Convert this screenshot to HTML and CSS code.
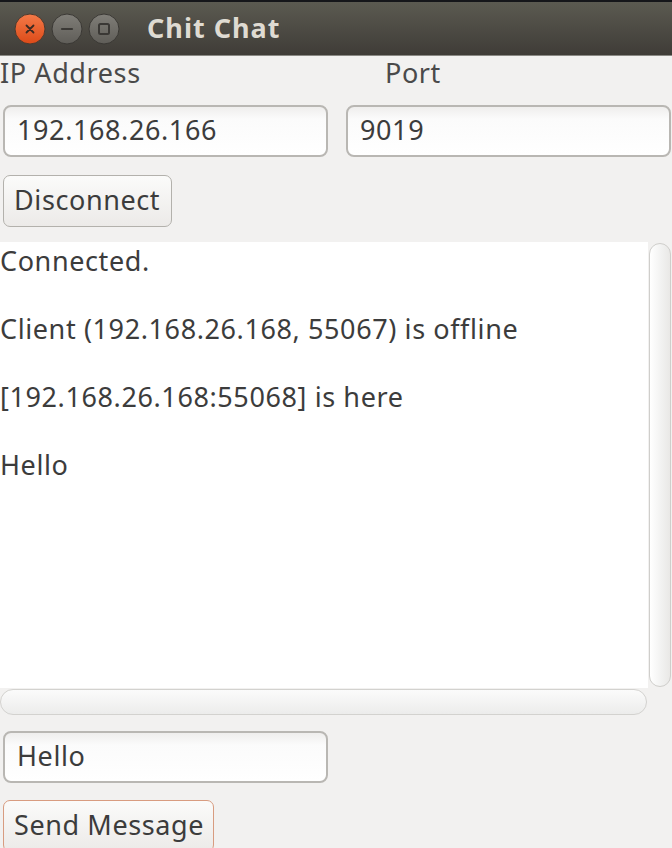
FILE: index.html
```html
<!DOCTYPE html>
<html>
<head>
<meta charset="utf-8">
<title>Chit Chat</title>
<link rel="stylesheet" href="styles.css">
</head>
<body>
<div class="window">
  <header class="titlebar">
    <div class="wbtns">
      <svg class="wbtn" width="32" height="32" viewBox="0 0 32 32">
        <defs>
          <linearGradient id="gClose" x1="0" y1="0" x2="0" y2="1">
            <stop offset="0" stop-color="#f47a48"/>
            <stop offset="1" stop-color="#dc4a18"/>
          </linearGradient>
          <linearGradient id="gGray" x1="0" y1="0" x2="0" y2="1">
            <stop offset="0" stop-color="#807e78"/>
            <stop offset="1" stop-color="#5f5d58"/>
          </linearGradient>
        </defs>
        <circle cx="16" cy="16" r="15" fill="url(#gClose)" stroke="#4a3a30" stroke-width="1"/>
        <path d="M12.5 12.5 L19.5 19.5 M19.5 12.5 L12.5 19.5" stroke="#3b2a22" stroke-width="1.8" stroke-linecap="round"/>
      </svg>
      <svg class="wbtn" width="32" height="32" viewBox="0 0 32 32">
        <circle cx="16" cy="16" r="15" fill="url(#gGray)" stroke="#3a3834" stroke-width="1"/>
        <path d="M11 16 H21" stroke="#3a3835" stroke-width="2.2" stroke-linecap="round"/>
      </svg>
      <svg class="wbtn" width="32" height="32" viewBox="0 0 32 32">
        <circle cx="16" cy="16" r="15" fill="url(#gGray)" stroke="#3a3834" stroke-width="1"/>
        <rect x="11" y="11" width="10" height="10" rx="1.5" fill="none" stroke="#3a3835" stroke-width="2"/>
      </svg>
    </div>
    <div class="title">Chit Chat</div>
  </header>

  <main class="content">
    <div class="conn">
      <span class="lbl lbl-ip">IP Address</span>
      <span class="lbl lbl-port">Port</span>
      <div class="entry">192.168.26.166</div>
      <div class="entry">9019</div>
    </div>

    <div class="btn btn-disconnect">Disconnect</div>

    <div class="log">
      <div class="view">
        <p>Connected.</p>
        <p>Client (192.168.26.168, 55067) is offline</p>
        <p>[192.168.26.168:55068] is here</p>
        <p>Hello</p>
      </div>
      <div class="vscroll"></div>
      <div class="hscroll"></div>
    </div>

    <div class="entry entry-msg">Hello</div>

    <div class="btn btn-send">Send Message</div>
  </main>
</div>
</body>
</html>
```

FILE: styles.css
```css
* { box-sizing: border-box; }

html, body {
  margin: 0;
  padding: 0;
  width: 672px;
  height: 848px;
  overflow: hidden;
  background: #f2f1f0;
}

body {
  font-family: "Noto Sans", "Open Sans", "DejaVu Sans", sans-serif;
  font-size: 27px;
  letter-spacing: 0.6px;
  line-height: 34px;
  color: #3c3c3c;
}

.window {
  display: flex;
  flex-direction: column;
  height: 848px;
}

.titlebar {
  height: 56px;
  flex: none;
  display: flex;
  align-items: center;
  padding-left: 14px;
  border-top: 2px solid #15161a;
  border-bottom: 1px solid #8a8984;
  background: linear-gradient(#5b5a51, #3f3c37);
}

.wbtns {
  display: flex;
  gap: 5px;
  margin-top: 1px;
}

.wbtn { display: block; }

.title {
  margin-left: 27px;
  font-weight: bold;
  color: #dfdbd2;
  font-size: 27px;
  letter-spacing: 1px;
  margin-top: -1px;
}

.content {
  display: flex;
  flex-direction: column;
  align-items: flex-start;
}

.conn {
  display: grid;
  grid-template-columns: 325px 325px;
  column-gap: 18px;
  row-gap: 15px;
  padding-left: 3px;
  width: 672px;
}

.lbl {
  color: #4a4a4a;
}

.lbl-ip { margin-left: -3px; }
.lbl-port { margin-left: 39px; }

.entry {
  height: 52px;
  display: flex;
  align-items: center;
  padding-left: 12px;
  padding-bottom: 3px;
  border: 2px solid #b9b7b3;
  border-radius: 8px;
  background: linear-gradient(#efeeed, #fbfbfb 25%, #ffffff);
  white-space: nowrap;
}

.btn {
  height: 52px;
  display: flex;
  align-items: center;
  padding-left: 10px;
  padding-right: 0;
  padding-bottom: 3px;
  margin-left: 3px;
  border: 1.5px solid #b3b1ac;
  border-radius: 7px;
  background: linear-gradient(#fbfbfa, #eceae8);
  white-space: nowrap;
}

.btn-disconnect {
  margin-top: 18px;
  width: 169px;
}

.log {
  margin-top: 15px;
  width: 672px;
  display: grid;
  grid-template-columns: 648px 24px;
  grid-template-rows: 446px 28px;
}

.view {
  background: #ffffff;
  padding-top: 2px;
  overflow: hidden;
}

.view p {
  margin: 0 0 34px 0;
  white-space: nowrap;
}

.vscroll {
  margin: 1px 1px 1px 1px;
  border: 1.5px solid #cfcecb;
  border-radius: 12px;
  background: linear-gradient(90deg, #ffffff, #f1f1f0 60%, #e9e8e6);
}

.hscroll {
  margin: 1px 1px 1px 0;
  border: 1.5px solid #d3d2cf;
  border-radius: 13px;
  background: linear-gradient(#fbfbfb, #ececeb);
}

.entry-msg {
  margin-top: 15px;
  margin-left: 3px;
  width: 325px;
}

.btn-send {
  margin-top: 17px;
  width: 211px;
  border-color: #d89c80;
}
```
